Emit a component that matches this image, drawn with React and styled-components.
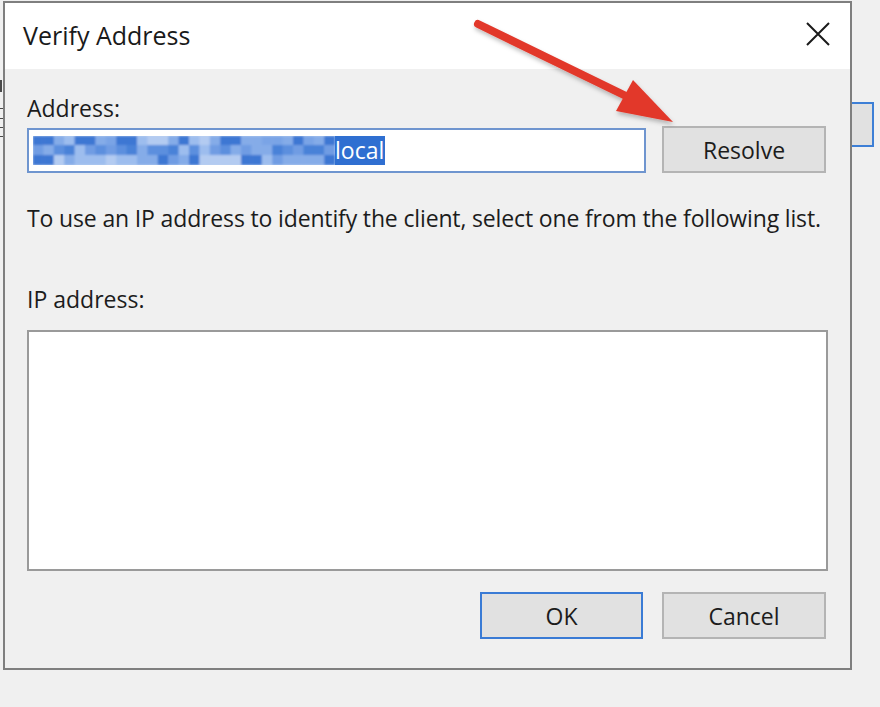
import React from "react";
import styled, { createGlobalStyle } from "styled-components";

const GlobalStyle = createGlobalStyle`
  html, body {
    margin: 0;
    padding: 0;
    background: #f0f0f0;
  }
  body {
    font-family: "Open Sans", "Noto Sans", "DejaVu Sans", sans-serif;
    color: #1c1c1c;
  }
`;

const Page = styled.div`
  position: relative;
  width: 880px;
  height: 707px;
  overflow: hidden;
  background: #f0f0f0;
`;

// bits of the window that sits behind the dialog
const BehindButton = styled.div`
  position: absolute;
  left: 846px;
  top: 102px;
  width: 28px;
  height: 45px;
  box-sizing: border-box;
  background: #e1e1e1;
  border: 2px solid #3d7fd6;
`;

const EdgeMark = styled.div`
  position: absolute;
  left: 0;
  top: ${(p) => p.top}px;
  width: ${(p) => p.w || 3}px;
  height: ${(p) => p.h || 1}px;
  background: #4a4a4a;
`;

const Window = styled.div`
  position: relative;
  margin-left: 3px;
  margin-top: 1px;
  width: 849px;
  height: 669px;
  box-sizing: border-box;
  border: 2px solid #7f7f7f;
  display: flex;
  flex-direction: column;
  background: #f0f0f0;
`;

const TitleBar = styled.div`
  height: 66px;
  flex-shrink: 0;
  background: #ffffff;
  display: flex;
  align-items: center;
  justify-content: space-between;
  padding: 0 20px 0 18px;
`;

const Title = styled.div`
  font-size: 25px;
  color: #1a1a1a;
  margin-top: -2px;
`;

const CloseButton = styled.div`
  width: 24px;
  height: 24px;
  display: flex;
  align-items: center;
  justify-content: center;
  margin-top: -4px;
`;

const Body = styled.div`
  flex: 1;
  display: flex;
  flex-direction: column;
  padding: 25px 20px 0 22px;
`;

const Label = styled.div`
  font-size: 23px;
  line-height: 28px;
  color: #1c1c1c;
`;

const AddressRow = styled.div`
  display: flex;
  align-items: flex-end;
  gap: 16px;
  margin-top: 4px;
`;

const AddressInput = styled.div`
  width: 619px;
  height: 45px;
  box-sizing: border-box;
  border: 2px solid #6f95cf;
  background: #ffffff;
  display: flex;
  align-items: center;
  padding-left: 4px;
`;

const Selection = styled.div`
  display: flex;
  align-items: stretch;
  height: 29px;
`;

const SelectedText = styled.span`
  background: #2f6fd1;
  color: #ffffff;
  font-size: 23px;
  line-height: 29px;
  padding: 0 1px 0 0;
`;

const Button = styled.div`
  width: ${(p) => p.w}px;
  height: 47px;
  box-sizing: border-box;
  background: #e1e1e1;
  border: ${(p) => (p.primary ? "2px solid #3a7bd5" : "2px solid #b4b4b4")};
  display: flex;
  align-items: center;
  justify-content: center;
  font-size: 23px;
  color: #1c1c1c;
`;

const Description = styled.div`
  font-size: 23px;
  line-height: 28px;
  margin-top: 31px;
  letter-spacing: -0.15px;
  white-space: nowrap;
`;

const ListLabel = styled(Label)`
  margin-top: 53px;
`;

const ListBox = styled.div`
  width: 801px;
  height: 241px;
  box-sizing: border-box;
  margin-top: 17px;
  border: 2px solid #9a9a9a;
  background: #ffffff;
`;

const ButtonRow = styled.div`
  display: flex;
  justify-content: flex-end;
  gap: 19px;
  margin-top: 21px;
  padding-right: 4px;
`;

const ArrowLayer = styled.svg`
  position: absolute;
  left: 0;
  top: 0;
  pointer-events: none;
`;

// pixelated (censored) part of the host name
const Mosaic = () => {
  const palette = ["#4a82d8", "#5c8fde", "#6f9ce3", "#85ace8", "#9dbdee", "#3e77d3", "#b3cbf1", "#7aa4e6"];
  let seed = 7;
  const rand = () => {
    seed = (seed * 9301 + 49297) % 233280;
    return seed / 233280;
  };
  const cols = 29;
  const cw = 10.4;
  const rows = [
    { y: 0, h: 9, bias: 3 },
    { y: 9, h: 10, bias: 0 },
    { y: 19, h: 10, bias: 2 },
  ];
  const rects = [];
  rows.forEach((r, ri) => {
    for (let c = 0; c < cols; c++) {
      const idx = Math.min(palette.length - 1, Math.floor(rand() * 5) + r.bias);
      rects.push(<rect key={`${ri}-${c}`} x={c * cw} y={r.y} width={cw + 0.5} height={r.h} fill={palette[idx]} />);
    }
  });
  return (
    <svg width="302" height="29" viewBox="0 0 302 29" style={{ display: "block" }}>
      <defs>
        <filter id="soft" x="0" y="0" width="100%" height="100%">
          <feGaussianBlur stdDeviation="0.8" />
        </filter>
      </defs>
      <rect width="302" height="29" fill="#bcd1f1" />
      <g filter="url(#soft)">{rects}</g>
    </svg>
  );
};

const App = () => {
  return (
    <Page>
      <GlobalStyle />
      <BehindButton />
      <EdgeMark top={80} w={2} h={12} />
      <EdgeMark top={108} />
      <EdgeMark top={118} />
      <EdgeMark top={127} />
      <EdgeMark top={136} />

      <Window>
        <TitleBar>
          <Title>Verify Address</Title>
          <CloseButton>
            <svg width="24" height="24" viewBox="0 0 24 24">
              <path d="M1 1 L23 23 M23 1 L1 23" stroke="#1a1a1a" strokeWidth="2" fill="none" />
            </svg>
          </CloseButton>
        </TitleBar>

        <Body>
          <Label>Address:</Label>
          <AddressRow>
            <AddressInput>
              <Selection>
                <Mosaic />
                <SelectedText>local</SelectedText>
              </Selection>
            </AddressInput>
            <Button w={164}>Resolve</Button>
          </AddressRow>

          <Description>
            To use an IP address to identify the client, select one from the following list.
          </Description>

          <ListLabel>IP address:</ListLabel>
          <ListBox />

          <ButtonRow>
            <Button w={163} primary>OK</Button>
            <Button w={164}>Cancel</Button>
          </ButtonRow>
        </Body>
      </Window>

      <ArrowLayer width="880" height="707" viewBox="0 0 880 707">
        <defs>
          <filter id="arrowShadow" x="-10%" y="-10%" width="130%" height="140%">
            <feDropShadow dx="1" dy="3" stdDeviation="2" floodColor="#000" floodOpacity="0.25" />
          </filter>
        </defs>
        <g filter="url(#arrowShadow)" fill="#e2382b">
          <line x1="478" y1="24" x2="628" y2="97" stroke="#e2382b" strokeWidth="8" strokeLinecap="round" />
          <polygon points="673,122 633,80 616,111" />
        </g>
      </ArrowLayer>
    </Page>
  );
};

export default App;
